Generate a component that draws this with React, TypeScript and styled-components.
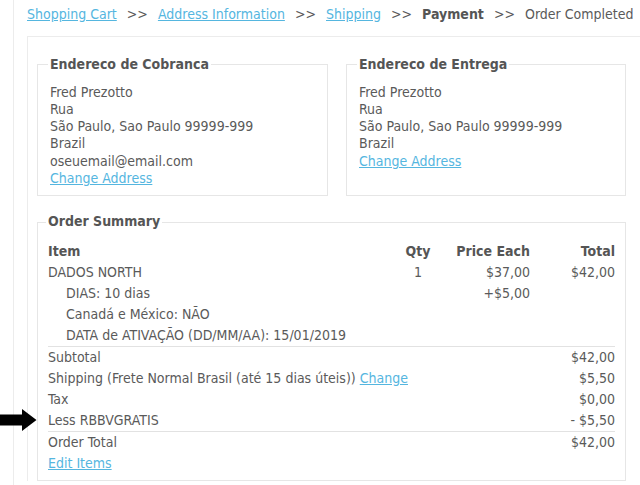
import React from 'react'
import styled, { createGlobalStyle } from 'styled-components'

const GlobalStyle = createGlobalStyle`
  html, body {
    margin: 0;
    padding: 0;
    background: #fff;
    overflow: hidden;
  }
  body {
    font-family: "DejaVu Sans Condensed", "DejaVu Sans", sans-serif;
    font-stretch: condensed;
    font-size: 14px;
    line-height: 17.3px;
    color: #5a5a5a;
  }
`

const Page = styled.div`
  position: relative;
  margin-left: 13px;
  border-left: 1px solid #ececec;
  padding-left: 13px;
  min-height: 485px;
`

const Crumbs = styled.div`
  padding-top: 6px;
  margin-bottom: 13px;
  white-space: nowrap;
`

const Link = styled.a`
  color: #55b6df;
  text-decoration: underline;
  cursor: pointer;
`

const Sep = styled.span`
  margin: 0 10px;
`

const Current = styled.b`
  color: #555;
`

const Panel = styled.div`
  border-left: 1px solid #ececec;
  border-top: 1px solid #ececec;
  padding: 19px 0 0 9px;
`

const Addresses = styled.div`
  display: grid;
  grid-template-columns: 291px 280px;
  column-gap: 18px;
  margin-bottom: 17px;
`

const Box = styled.fieldset`
  margin: 0;
  min-width: 0;
  border: 1px solid #e6e6e6;
  padding: 10px 12px 8px;
`

const Legend = styled.legend`
  font-weight: bold;
  color: #555;
  padding: 0 2px;
  margin-left: -2px;
`

const Line = styled.div``

const Summary = styled(Box)`
  width: 567px;
  padding: 10px 10px 6px 10px;
`

const Table = styled.table`
  width: 100%;
  border-collapse: collapse;
  line-height: 17px;
`

const Th = styled.th<{ $align?: string; $w?: number }>`
  font-weight: bold;
  color: #555;
  padding: 2px 0;
  text-align: ${(p) => p.$align ?? 'left'};
  width: ${(p) => (p.$w ? `${p.$w}px` : 'auto')};
`

const Td = styled.td<{ $align?: string; $indent?: boolean }>`
  padding: 2px 0;
  vertical-align: top;
  text-align: ${(p) => p.$align ?? 'left'};
  padding-left: ${(p) => (p.$indent ? '18px' : '0')};
`

const Row = styled.tr<{ $rule?: boolean }>`
  border-top: ${(p) => (p.$rule ? '1px solid #e2e2e2' : 'none')};
`

const LabelCell = styled(Td)`
  position: relative;
`

const Arrow = styled.svg`
  position: absolute;
  left: -48px;
  top: 50%;
  transform: translateY(-50%);
`

const billing = ['Fred Prezotto', 'Rua', 'São Paulo, Sao Paulo 99999-999', 'Brazil', 'oseuemail@email.com']
const shipping = ['Fred Prezotto', 'Rua', 'São Paulo, Sao Paulo 99999-999', 'Brazil']

const options = ['DIAS: 10 dias', 'Canadá e México: NÃO', 'DATA de ATIVAÇÃO (DD/MM/AA): 15/01/2019']

const App = () => (
  <>
    <GlobalStyle />
    <Page>
      <Crumbs>
        <Link>Shopping Cart</Link>
        <Sep>&gt;&gt;</Sep>
        <Link>Address Information</Link>
        <Sep>&gt;&gt;</Sep>
        <Link>Shipping</Link>
        <Sep>&gt;&gt;</Sep>
        <Current>Payment</Current>
        <Sep>&gt;&gt;</Sep>
        Order Completed
      </Crumbs>
      <Panel>
        <Addresses>
          <Box>
            <Legend>Endereco de Cobranca</Legend>
            {billing.map((l, i) => (
              <Line key={i}>{l}</Line>
            ))}
            <Link>Change Address</Link>
          </Box>
          <Box>
            <Legend>Endereco de Entrega</Legend>
            {shipping.map((l, i) => (
              <Line key={i}>{l}</Line>
            ))}
            <Link>Change Address</Link>
          </Box>
        </Addresses>
        <Summary>
          <Legend>Order Summary</Legend>
          <Table>
            <thead>
              <tr>
                <Th>Item</Th>
                <Th $align="center" $w={50}>Qty</Th>
                <Th $align="right" $w={87}>Price Each</Th>
                <Th $align="right" $w={85}>Total</Th>
              </tr>
            </thead>
            <tbody>
              <tr>
                <Td>DADOS NORTH</Td>
                <Td $align="center">1</Td>
                <Td $align="right">$37,00</Td>
                <Td $align="right">$42,00</Td>
              </tr>
              {options.map((o, i) => (
                <tr key={o}>
                  <Td $indent>{o}</Td>
                  <Td />
                  <Td $align="right">{i === 0 ? '+$5,00' : ''}</Td>
                  <Td />
                </tr>
              ))}
              <Row $rule>
                <Td colSpan={3}>Subtotal</Td>
                <Td $align="right">$42,00</Td>
              </Row>
              <tr>
                <Td colSpan={3}>
                  Shipping (Frete Normal Brasil (até 15 dias úteis)) <Link>Change</Link>
                </Td>
                <Td $align="right">$5,50</Td>
              </tr>
              <tr>
                <Td colSpan={3}>Tax</Td>
                <Td $align="right">$0,00</Td>
              </tr>
              <tr>
                <LabelCell colSpan={3}>
                  <Arrow width="37" height="24" viewBox="0 0 37 24">
                    <path d="M0 6.5H22V1L36.5 12L22 23V17.5H0Z" fill="#000" />
                  </Arrow>
                  Less RBBVGRATIS
                </LabelCell>
                <Td $align="right">- $5,50</Td>
              </tr>
              <Row $rule>
                <Td colSpan={3}>Order Total</Td>
                <Td $align="right">$42,00</Td>
              </Row>
              <tr>
                <Td colSpan={4}>
                  <Link>Edit Items</Link>
                </Td>
              </tr>
            </tbody>
          </Table>
        </Summary>
      </Panel>
    </Page>
  </>
)

export default App
